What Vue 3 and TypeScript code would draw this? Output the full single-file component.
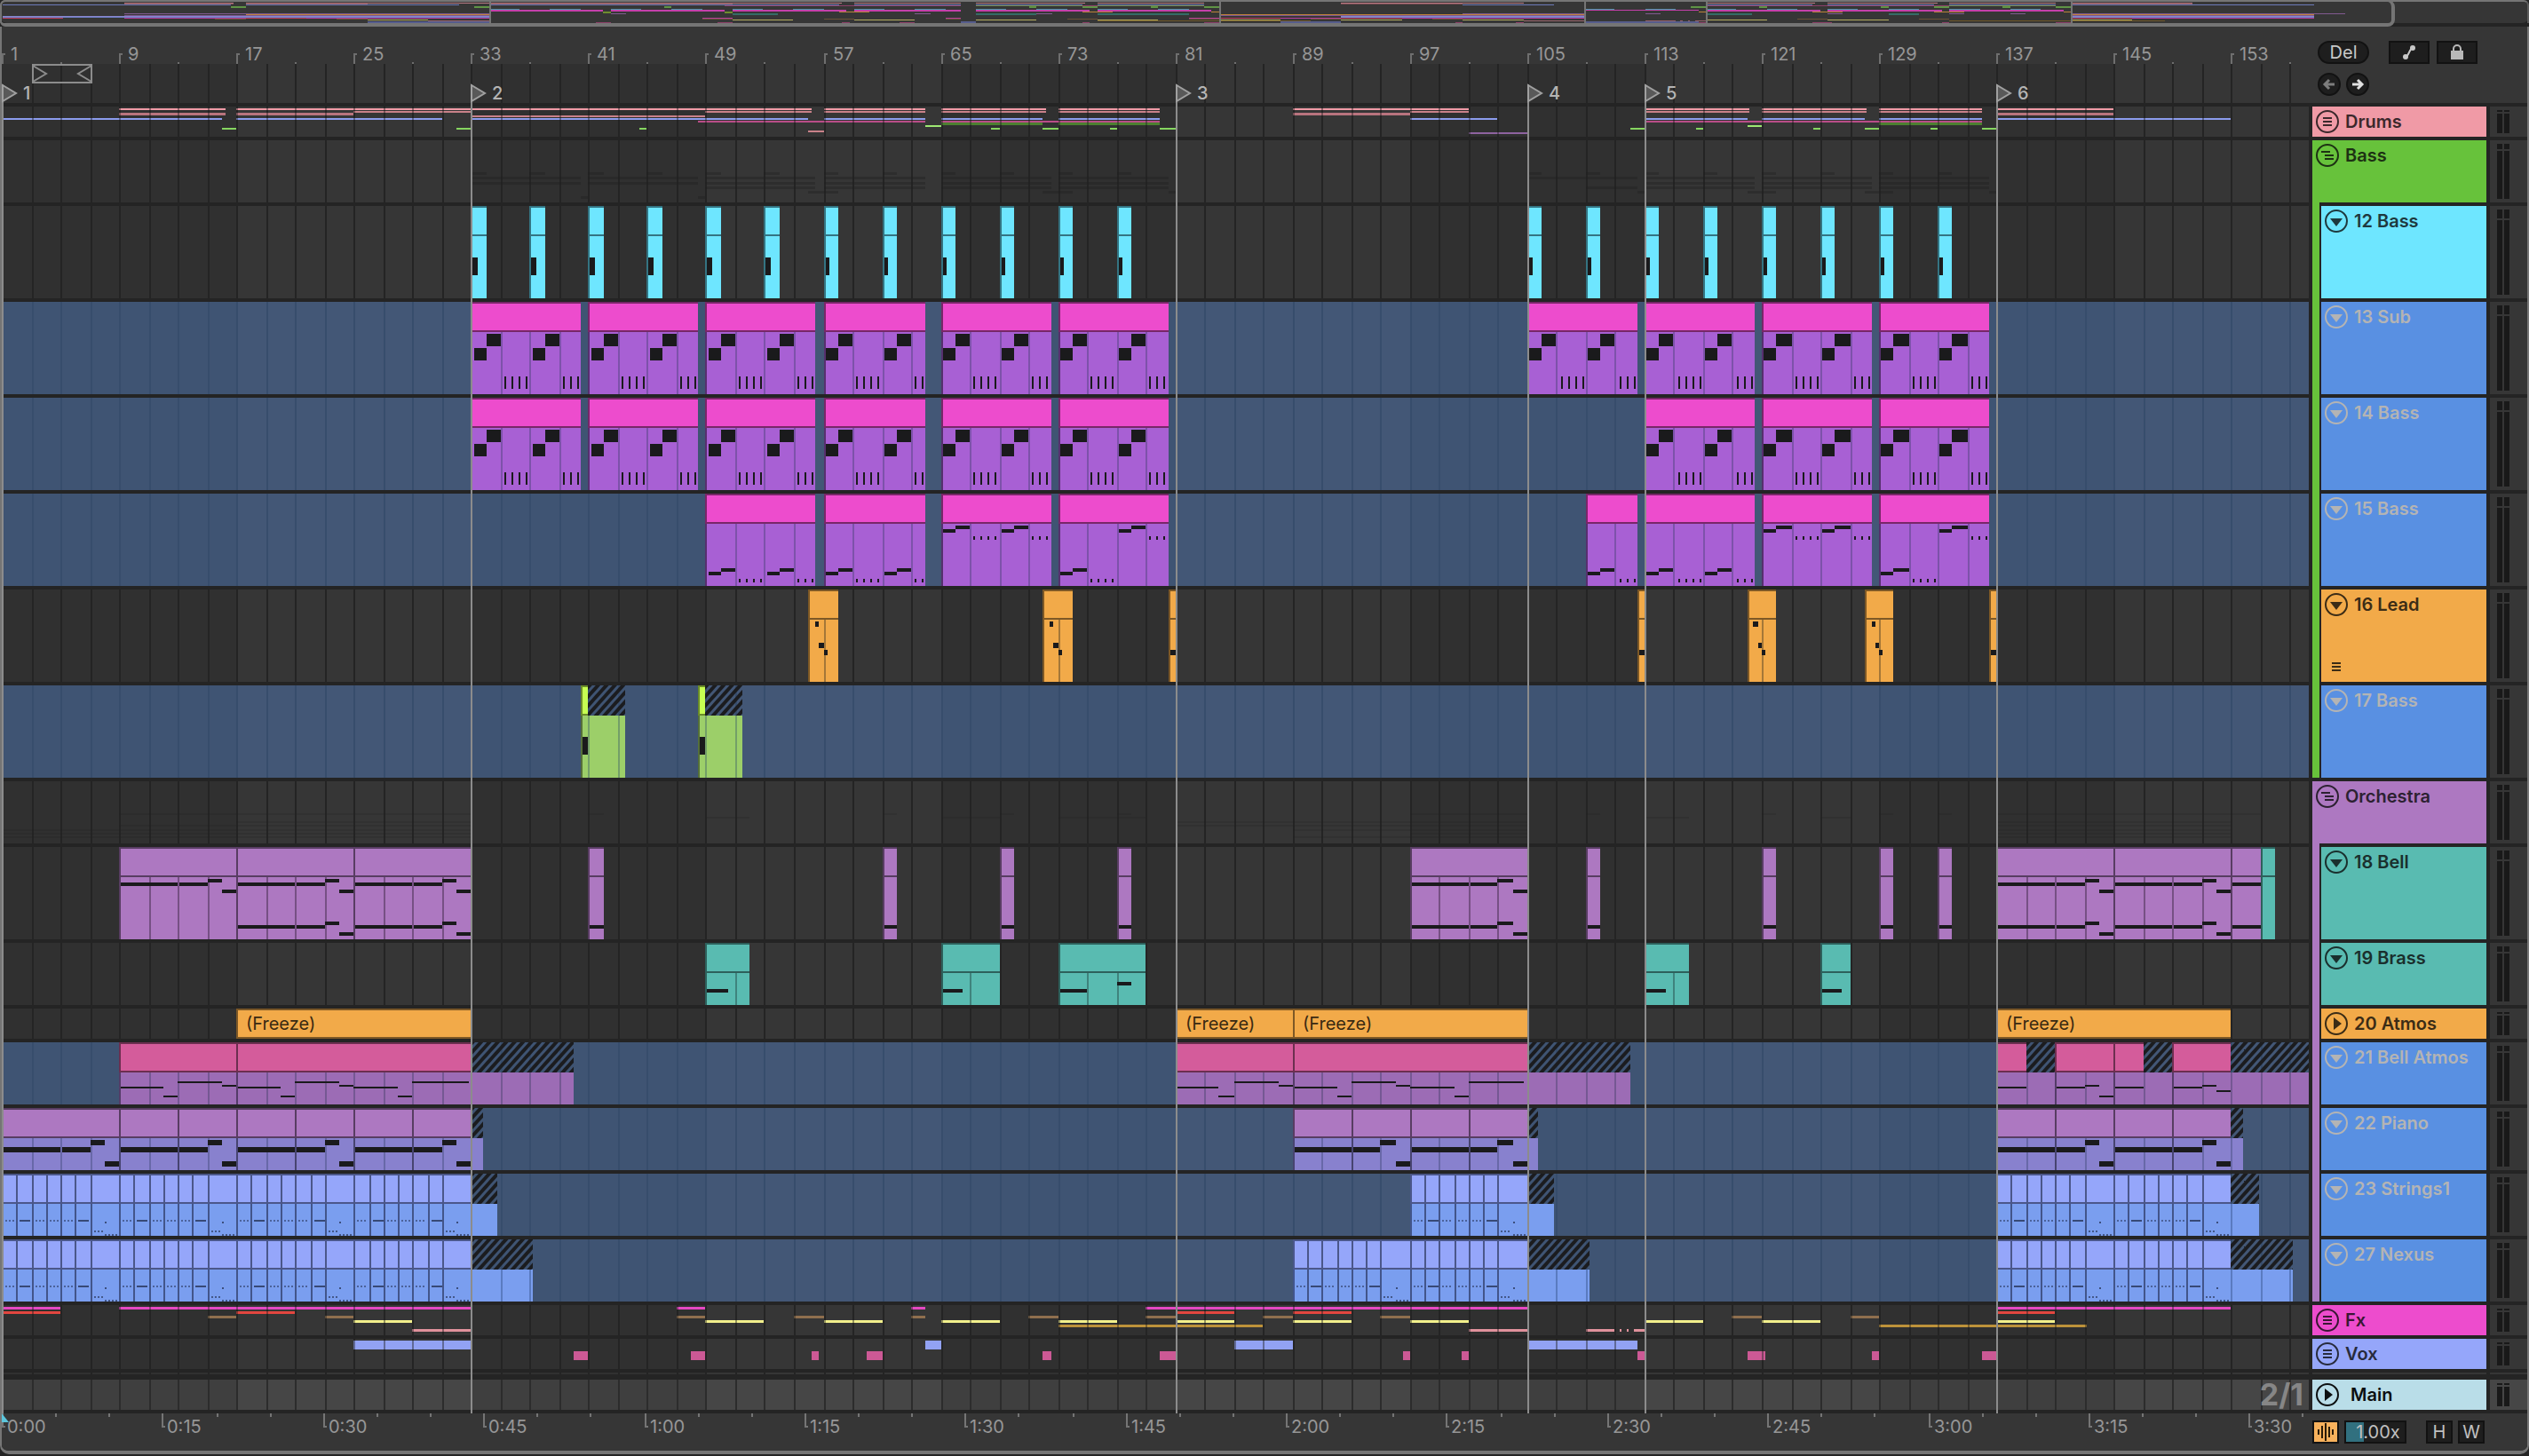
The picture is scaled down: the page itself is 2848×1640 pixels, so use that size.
<script setup lang="ts">
interface Box { x: number; y: number; w: number; h: number; f: string; o?: number }
interface Label { x: number; text: string }
interface Note { at: number; to: number; y: number; h: number; o?: number }
type Span = [number, number]
type Size = 's' | 'm' | 'l'
interface Lane { size: Size; muted: boolean; boxes: Box[]; labels: Label[] }
interface Track { name: string; color: string; size: Size; icon: string; muted?: boolean; extra?: boolean }
interface Group extends Track { kids: Track[] }

const BAR = 16.515
const END = 260
const heights: Record<Size, number> = { s: 34, m: 70, l: 104 }
const INK = '#1a1a1c'

// Bar number to pixels, snapped to the two-pixel raster of the arrangement
const px = (bar: number): number => 2 * Math.floor((1.2 + BAR * (bar - 1)) / 2)
const span = (a: number, b: number, y: number, h: number, f: string, o = 1): Box =>
  ({ x: px(a), y, w: px(b) - px(a), h, f, o })

function gridPath(h: number): string {
  let d = ''
  for (let b = 3; b < END; b += 2) d += `M${px(b)} 0h2v${h}h-2z`
  return d
}
function shadePath(h: number): string {
  let d = ''
  for (let b = 17; b < END; b += 32) d += `M${px(b)} 0h${px(b + 16) - px(b)}v${h}H${px(b)}z`
  return d
}

function body(out: Box[], a: number, b: number, h: number, fill: string, line: string): void {
  out.push(span(a, b, 34, h - 34, fill))
  for (let g = Math.floor(a / 2) * 2 + 1; g < b; g += 2) {
    if (g >= a) out.push({ x: px(g), y: 34, w: 2, h: h - 34, f: line })
  }
}
function clip(out: Box[], a: number, b: number, h: number, c: Palette, notes: Note[] = []): void {
  const x = px(a)
  const w = px(b) - x
  out.push({ x, y: 0, w, h: 34, f: c.edge })
  out.push({ x: x + 2, y: 2, w: w - 2, h: 30, f: c.title })
  body(out, a, b, h, c.body, c.line)
  out.push({ x, y: 34, w: 2, h: h - 34, f: c.side })
  for (const n of notes) {
    if (a + n.at >= b) continue
    const nx = n.at === 0 ? x + 2 : px(a + n.at)
    const end = n.to - n.at < 0.2 ? nx + 2 : px(Math.min(a + n.to, b))
    out.push({ x: nx, y: n.y, w: end - nx, h: n.h, f: INK, o: n.o ?? 1 })
  }
}
function hatch(out: Box[], a: number, b: number, h: number, c: Palette): void {
  out.push(span(a, b, 0, 34, 'url(#hatch)'))
  body(out, a, b, h, c.body, c.line)
}

interface Palette { title: string; body: string; edge: string; side: string; line: string }
const cyan: Palette = { title: '#6ee6ff', body: '#6ee6ff', edge: '#347482', side: '#347482', line: '#4ba0b0' }
const pink: Palette = { title: '#ed4ccd', body: '#a860d4', edge: '#782768', side: '#56306e', line: '#7d52aa' }
const orange: Palette = { title: '#f2aa49', body: '#f2aa49', edge: '#7d5826', side: '#7d5826', line: '#a47738' }
const lime: Palette = { title: '#c6ff52', body: '#9ccf69', edge: '#6b8c2a', side: '#556f3a', line: '#739f68' }
const purple: Palette = { title: '#ad78c1', body: '#ad78c1', edge: '#583d62', side: '#583d62', line: '#765084' }
const teal: Palette = { title: '#59bbb1', body: '#59bbb1', edge: '#2d605b', side: '#2d605b', line: '#3f837d' }
const rose: Palette = { title: '#d45c9b', body: '#9c6cb5', edge: '#6c2f50', side: '#543c68', line: '#755893' }
const piano: Palette = { title: '#ad78c1', body: '#8881ce', edge: '#583d62', side: '#474470', line: '#6868a8' }
const azure: Palette = { title: '#95a6fa', body: '#7a9eef', edge: '#4b578a', side: '#42558a', line: '#5a7bc0' }

const lane = (size: Size, muted = false): Lane => ({ size, muted, boxes: [], labels: [] })

// Collapsed groups: one thin coloured stripe per inner track
type Stripe = { y: number; h: number; f: string; spans: Span[] }
const drumStripes: Stripe[] = [
  { y: 2, h: 2, f: '#f09aa6', spans: [[9, 16.2], [17, 56.2], [57, 64], [65, 72.2], [73, 80], [89, 101], [113, 120.2], [121, 128.2], [129, 136], [137, 145]] },
  { y: 5, h: 2, f: '#c98189', spans: [[25, 33], [49, 56.2], [57, 64], [65, 72.2], [73, 80], [97, 101], [113, 120.2], [121, 128.2], [129, 136]] },
  { y: 7, h: 3, f: '#b9747e', spans: [[9, 16.2], [17, 25], [89, 97], [137, 145]] },
  { y: 10, h: 2, f: '#c98189', spans: [[33, 49]] },
  { y: 13, h: 2, f: '#8c9cee', spans: [[1, 16], [17, 31], [33, 56], [57, 64], [65, 72], [73, 80], [97, 103], [113, 120], [121, 128], [129, 136], [137, 153]] },
  { y: 16, h: 2, f: '#b94d88', spans: [[48.5, 64], [65, 80], [113, 136]] },
  { y: 18, h: 3, f: '#4c8030', spans: [[65, 72], [73, 80], [129, 136]] },
  { y: 21, h: 2, f: '#9ee873', spans: [[64, 65], [120, 121]] },
  { y: 24, h: 2, f: '#86d660', spans: [[16, 17], [32, 33], [44.5, 45], [68.5, 69], [72, 73], [76.5, 77], [80, 81], [112, 113], [116.5, 117], [124.5, 125], [128, 129], [132.5, 133], [136, 137]] },
  { y: 27, h: 2, f: '#c98189', spans: [[56, 57]] },
  { y: 29, h: 2, f: '#8e63a0', spans: [[101, 105]] },
]
const fxStripes: Stripe[] = [
  { y: 2, h: 3, f: '#e548c2', spans: [[1, 5], [9, 33], [47, 49], [63, 64], [79, 105], [137, 153]] },
  { y: 7, h: 3, f: '#e2463f', spans: [[1, 5], [17, 21], [81, 85], [89, 93], [137, 141]] },
  { y: 12, h: 3, f: '#8f6f4e', spans: [[15, 17], [23, 25], [47, 49], [55, 57], [63, 64], [71, 73], [79, 81], [87, 89], [95, 97], [119, 121], [127, 129]] },
  { y: 17, h: 3, f: '#f2f08c', spans: [[25, 29], [49, 53], [57, 61], [65, 69], [73, 77], [81, 85], [89, 93], [97, 101], [113, 117], [121, 125], [137, 141]] },
  { y: 22, h: 3, f: '#bd923a', spans: [[73, 87], [129, 143.2]] },
  { y: 27, h: 3, f: '#e0919c', spans: [[29, 33], [101, 105], [109, 111], [111.3, 111.45], [111.8, 111.95], [112.3, 113]] },
]
const voxStripes: Stripe[] = [
  { y: 2, h: 10, f: '#92a2f4', spans: [[25, 33], [64, 65], [85, 89], [105, 112.5]] },
  { y: 14, h: 10, f: '#cc5995', spans: [[40, 41], [48, 49], [56.2, 56.7], [60, 61], [72, 72.5], [80, 81], [96.5, 97], [100.5, 101], [112.5, 113], [120, 121.3], [128.5, 129], [136, 137]] },
]
function stripes(list: Stripe[]): Lane {
  const l = lane('s')
  for (const s of list) {
    for (const [a, b] of s.spans) {
      l.boxes.push(span(a, b, s.y, s.h, s.f))
      for (let g = Math.ceil(a / 2) * 2 - 1; g < b; g += 2) {
        if (g >= a) l.boxes.push({ x: px(g), y: s.y, w: 2, h: s.h, f: '#242424', o: 0.45 })
      }
    }
  }
  return l
}

const every = (a: number, b: number, step: number): Span[] => {
  const r: Span[] = []
  for (let k = a; k <= b; k += step) r.push([k, k + 1])
  return r
}
const bassClips: Span[] = [...every(33, 77, 4), ...every(105, 133, 4)]
const subClips: Span[] = [[33, 40.5], [41, 48.5], [49, 56.5], [57, 64], [65, 72.5], [73, 80.5], [105, 112.5], [113, 120.5], [121, 128.5], [129, 136.5]]
const bass14: Span[] = subClips.filter(([a]) => a !== 105)
const bass15: Span[] = [[49, 56.5], [57, 64], [65, 72.5], [73, 80.5], [109, 112.5], [113, 120.5], [121, 128.5], [129, 136.5]]
const leadClips: Span[] = [[56, 58], [72, 74], [80.5, 81], [112.5, 113], [120, 122], [128, 130], [136.5, 137]]
const bellLong: Span[] = [[9, 17], [17, 25], [25, 33], [97, 105], [137, 145], [145, 153], [153, 155]]
const bellShort: Span[] = [[41, 42], [61, 62], [69, 70], [77, 78], [109, 110], [121, 122], [129, 130], [133, 134]]
const brassClips: Span[] = [[49, 52], [65, 69], [73, 79], [113, 116], [125, 127]]
const freezeClips: Span[] = [[17, 33], [81, 89], [89, 105], [137, 153]]

function riff(lo: number, hi: number, dot: number, h: number, dotH: number, start: number): Note[] {
  const r: Note[] = [
    { at: start + 0.15, to: start + 1, y: lo, h },
    { at: start + 1, to: start + 2, y: hi, h },
  ]
  for (let k = 0; k < 4; k++) r.push({ at: start + 2.27 + k * 0.485, to: start + 2.3 + k * 0.485, y: dot, h: dotH })
  return r
}

const bassLane = lane('l')
for (const [a, b] of bassClips) clip(bassLane.boxes, a, b, 104, cyan, [{ at: 0, to: 0.4, y: 58, h: 20 }])
const subLane = (spans: Span[]): Lane => {
  const l = lane('l', true)
  for (const [a, b] of spans) clip(l.boxes, a, b, 104, pink, [...riff(52, 36, 84, 14, 14, 0), ...riff(52, 36, 84, 14, 14, 4)])
  return l
}
const lane15 = lane('l', true)
for (const [a, b] of bass15) {
  const low = (s: number): Note[] => riff(88, 84, 96, 4, 4, s)
  const high = (s: number): Note[] => riff(40, 36, 48, 4, 4, s)
  const allHigh = a === 65 || a === 121
  clip(lane15.boxes, a, b, 104, pink, [...(allHigh ? high(0) : low(0)), ...(allHigh || a === 73 || a === 129 ? high(4) : low(4))])
}
const leadLane = lane('l')
for (const [a, b] of leadClips) {
  clip(leadLane.boxes, a, b, 104, orange, b - a < 1
    ? [{ at: 0, to: 1, y: 68, h: 6 }]
    : [{ at: 0.45, to: 0.7, y: 36, h: 6 }, { at: 0.7, to: 1, y: 60, h: 6 }, { at: 1, to: 1.25, y: 68, h: 6 }])
}
const lane17 = lane('l', true)
for (const a of [40.5, 48.5]) {
  clip(lane17.boxes, a, a + 0.5, 104, lime, [{ at: 0, to: 1, y: 58, h: 20 }])
  hatch(lane17.boxes, a + 0.5, a + 2.95, 104, lime)
}

const bellRun = (y: number): Note[] => [
  { at: 0, to: 4, y: y + 4, h: 4 }, { at: 4.1, to: 6, y: y + 4, h: 4 }, { at: 6, to: 7, y, h: 4 }, { at: 7, to: 8, y: y + 12, h: 4 },
]
const bellLane = lane('l')
for (const [a, b] of bellLong) clip(bellLane.boxes, a, b, 104, purple, a === 9 ? bellRun(36) : [...bellRun(36), ...bellRun(84)])
for (const [a, b] of bellShort) clip(bellLane.boxes, a, b, 104, purple, [{ at: 0, to: 1, y: 88, h: 4 }])
clip(bellLane.boxes, 155, 156, 104, teal)

const brassLane = lane('m')
for (const [a, b] of brassClips) {
  clip(brassLane.boxes, a, b, 70, teal, a === 73
    ? [{ at: 0, to: 2, y: 52, h: 4 }, { at: 4, to: 5, y: 44, h: 4 }]
    : [{ at: 0, to: 1.5, y: 52, h: 4 }])
}
const atmosLane = lane('s')
for (const [a, b] of freezeClips) {
  const x = px(a)
  const w = px(b) - x
  atmosLane.boxes.push({ x, y: 0, w, h: 34, f: orange.edge }, { x: x + 2, y: 2, w: w - 2, h: 30, f: orange.title })
  atmosLane.labels.push({ x: x + 11, text: '(Freeze)' })
}

const bellAtmos = lane('m', true)
const phrase = (s: number, last = false): Note[] => [
  { at: s, to: s + 3, y: 50, h: 2 }, { at: s + 3, to: s + 4, y: 60, h: 2 }, { at: s + 4, to: s + (last ? 7.8 : 7), y: 44, h: 2 },
  ...(last ? [] : [{ at: s + 7, to: s + 8, y: 48, h: 2 }]),
]
for (const a of [9, 81]) {
  clip(bellAtmos.boxes, a, a + 8, 70, rose, phrase(0))
  clip(bellAtmos.boxes, a + 8, a + 24, 70, rose, [...phrase(0), ...phrase(8, true)])
  hatch(bellAtmos.boxes, a + 24, a + 31, 70, rose)
}
const two: Note = { at: 0, to: 2, y: 50, h: 2 }
clip(bellAtmos.boxes, 137, 139, 70, rose, [two])
hatch(bellAtmos.boxes, 139, 141, 70, rose)
clip(bellAtmos.boxes, 141, 145, 70, rose, [two, { at: 2, to: 3, y: 48, h: 2 }, { at: 3, to: 4, y: 60, h: 2 }])
clip(bellAtmos.boxes, 145, 147, 70, rose, [two])
hatch(bellAtmos.boxes, 147, 149, 70, rose)
clip(bellAtmos.boxes, 149, 153, 70, rose, [two, { at: 2, to: 3, y: 48, h: 2 }, { at: 3, to: 4, y: 54, h: 2 }])
hatch(bellAtmos.boxes, 153, 161, 70, rose)

const pianoLane = lane('m', true)
const first: Note = { at: 0, to: 4, y: 44, h: 6 }
const second: Note[] = [{ at: 0, to: 2, y: 44, h: 6 }, { at: 2, to: 3, y: 36, h: 6 }, { at: 3, to: 4, y: 60, h: 6 }]
clip(pianoLane.boxes, 1, 9, 70, piano, [first, { at: 4.1, to: 6, y: 44, h: 6 }, { at: 6, to: 7, y: 36, h: 6 }, { at: 7, to: 8, y: 60, h: 6 }])
for (const a of [9, 17, 25, 89, 97, 137, 145]) {
  clip(pianoLane.boxes, a, a + 4, 70, piano, [first])
  clip(pianoLane.boxes, a + 4, a + 8, 70, piano, second)
}
for (const a of [33, 105, 153]) hatch(pianoLane.boxes, a, a + 0.8, 70, piano)

function chops(starts: number[], tails: Span[]): Lane {
  const l = lane('m', true)
  for (const s of starts) {
    for (let k = 0; k < 7; k++) {
      const a = s + k
      clip(l.boxes, a, k === 6 ? a + 2 : a + 1, 70, azure)
      const dense = k === 1 || k === 5
      if (k < 6) {
        for (let d = 0; d < 3; d++) l.boxes.push({ x: px(a) + 4 + d * 4, y: 52, w: dense ? 4 : 2, h: 2, f: '#2c3a60', o: dense ? 0.85 : 0.6 })
      } else {
        for (let d = 0; d < 3; d++) l.boxes.push({ x: px(a) + 4 + d * 4, y: 64, w: 2, h: 2, f: '#2c3a60', o: 0.7 })
        for (let d = 0; d < 4; d++) l.boxes.push({ x: px(a + 1) + d * 4, y: 68, w: 2, h: 2, f: '#2c3a60', o: 0.7 })
        l.boxes.push({ x: px(a + 1), y: 54, w: 2, h: 2, f: '#2c3a60', o: 0.8 })
      }
    }
  }
  for (const [a, b] of tails) hatch(l.boxes, a, b, 70, azure)
  return l
}
const stringsLane = chops([1, 9, 17, 25, 97, 137, 145], [[33, 34.8], [105, 106.85], [153, 154.9]])
const nexusLane = chops([1, 9, 17, 25, 89, 97, 137, 145], [[33, 37.2], [105, 109.2], [153, 157.2]])

// Unfolded groups show a faint shadow of the clips they hold
const shadow = (list: Span[][], top: number, pitch: number, h: number): Lane => {
  const l = lane('m')
  list.forEach((spans, i) => {
    for (const [a, b] of spans) l.boxes.push(span(a, b, Math.round(top + i * pitch), h, '#202020', 0.4))
  })
  return l
}
const bassGroup = shadow([bassClips, subClips, bass14, bass15, leadClips, [[40.5, 41], [48.5, 49]]], 36, 5.3, 3)
const orchGroup = shadow([[...bellLong, ...bellShort], brassClips, freezeClips, [[9, 33], [81, 105], [137, 153]], [[1, 33], [89, 105], [137, 153]], [[1, 33], [97, 105], [137, 153]], [[1, 33], [89, 105], [137, 153]]], 36, 4.4, 2)
for (const b of orchGroup.boxes) b.o = 0.22

const lanes: Lane[] = [
  stripes(drumStripes), bassGroup, bassLane, subLane(subClips), subLane(bass14), lane15, leadLane, lane17,
  orchGroup, bellLane, brassLane, atmosLane, bellAtmos, pianoLane, stringsLane, nexusLane,
  stripes(fxStripes), stripes(voxStripes),
]

const blue = '#5990e2'
const groups: Group[] = [
  { name: 'Drums', color: '#f09aa6', size: 's', icon: 'lines', kids: [] },
  { name: 'Bass', color: '#67c23b', size: 'm', icon: 'tree', kids: [
    { name: '12 Bass', color: '#6ee6ff', size: 'l', icon: 'down' },
    { name: '13 Sub', color: blue, size: 'l', icon: 'down', muted: true },
    { name: '14 Bass', color: blue, size: 'l', icon: 'down', muted: true },
    { name: '15 Bass', color: blue, size: 'l', icon: 'down', muted: true },
    { name: '16 Lead', color: '#f2aa49', size: 'l', icon: 'down', extra: true },
    { name: '17 Bass', color: blue, size: 'l', icon: 'down', muted: true },
  ] },
  { name: 'Orchestra', color: '#ad78c1', size: 'm', icon: 'tree', kids: [
    { name: '18 Bell', color: '#59bbb1', size: 'l', icon: 'down' },
    { name: '19 Brass', color: '#59bbb1', size: 'm', icon: 'down' },
    { name: '20 Atmos', color: '#f2aa49', size: 's', icon: 'right' },
    { name: '21 Bell Atmos', color: blue, size: 'm', icon: 'down', muted: true },
    { name: '22 Piano', color: blue, size: 'm', icon: 'down', muted: true },
    { name: '23 Strings1', color: blue, size: 'm', icon: 'down', muted: true },
    { name: '27 Nexus', color: blue, size: 'm', icon: 'down', muted: true },
  ] },
  { name: 'Fx', color: '#ed4ccd', size: 's', icon: 'lines', kids: [] },
  { name: 'Vox', color: '#95a6fa', size: 's', icon: 'lines', kids: [] },
]
const glyph: Record<string, string> = {
  lines: 'M8 8h10v2H8zM8 12h10v2H8zM8 16h10v2H8z',
  tree: 'M6 8h10v2H6zM10 12h10v2H10zM10 16h10v2H10z',
  down: 'M6 10h14l-7 9z',
  right: 'M10 6v14l9-7z',
}
const inkOf = (t: Track): string => (t.muted ? '#b4b4b4' : `color-mix(in srgb, ${t.color} 22%, #080808)`)

const locators = [1, 33, 81, 105, 113, 137].map((bar, i) => ({ bar, n: i + 1 }))
const barMarks = Array.from({ length: 20 }, (_, i) => 1 + i * 8)
const halfMarks = barMarks.map((b) => b + 4)
const sec = (s: number): number => 2 * Math.floor((1.2 + s * 12.05) / 2)
const timeMarks = Array.from({ length: 15 }, (_, i) => i * 15)
const shortMarks = timeMarks.flatMap((t) => [t + 5, t + 10])
const clock = (s: number): string => `${Math.floor(s / 60)}:${String(s % 60).padStart(2, '0')}`

// Song overview
const mini: Box[] = []
const ox = (bar: number): number => Math.round(2.6 + 17.13 * (bar - 1))
const ov = (spans: Span[], y: number, h: number, f: string): void => {
  for (const [a, b] of spans) mini.push({ x: ox(a), y, w: ox(b) - ox(a), h, f })
}
ov(drumStripes[0].spans, 3, 1, '#b97b84')
ov(drumStripes[2].spans, 4, 1, '#7e5056')
ov([[33, 49]], 4, 1, '#7e5056')
ov(drumStripes[4].spans, 5, 1, '#6c7ab8')
ov(drumStripes[5].spans, 6, 1, '#8d4069')
ov(drumStripes[6].spans, 6, 1, '#6c8040')
ov(drumStripes[8].spans, 7, 2, '#5f9446')
ov(bassClips.map(([a]) => [a, a + 2] as Span), 10, 1, '#4a9aa8')
ov(subClips, 11, 1, '#c440aa')
ov(bass14, 12, 1, '#c440aa')
ov(leadClips, 13, 1, '#b98439')
ov([[40.5, 41], [48.5, 49]], 13, 2, '#6f8c2e')
ov(bellShort, 15, 1, '#815a90')
ov(bellLong, 15, 1, '#815a90')
ov(brassClips, 15, 2, '#346c66')
ov(freezeClips, 16, 1, '#c08238')
ov([[9, 33], [81, 105], [137, 153]], 17, 1, '#7d5590')
ov([[1, 33], [89, 105], [137, 153]], 18, 1, '#8a86cc')
ov([[1, 33], [89, 105], [137, 153]], 19, 1, '#6a7fc2')
ov(fxStripes[0].spans, 20, 1, '#b83c9c')
ov(fxStripes[1].spans, 20, 1, '#c03f5c')
ov(fxStripes[2].spans, 21, 1, '#6c5439')
ov(fxStripes[3].spans, 22, 1, '#b5ae60')
ov(fxStripes[4].spans, 23, 1, '#6f5728')
ov(fxStripes[5].spans, 23, 1, '#96626a')
ov(voxStripes[0].spans, 24, 2, '#565d8c')
ov(voxStripes[1].spans, 25, 1, '#8d4069')
for (const b of [33, 81, 105, 113, 137]) mini.push({ x: ox(b), y: 2, w: 2, h: 24, f: '#757575' })
</script>

<template>
  <main class="window">
    <svg class="defs" aria-hidden="true">
      <defs>
        <pattern id="hatch" width="7" height="7" patternUnits="userSpaceOnUse" patternTransform="rotate(42)">
          <rect width="4" height="7" fill="#1b1c1f" />
        </pattern>
      </defs>
    </svg>

    <section class="overview" aria-label="Song overview">
      <svg class="overview-map" viewBox="0 0 2848 26" preserveAspectRatio="none">
        <rect v-for="(b, i) in mini" :key="i" :x="b.x" :y="b.y" :width="b.w" :height="b.h" :fill="b.f" />
      </svg>
      <div class="overview-view"></div>
    </section>

    <div class="frame">
      <header class="top">
        <svg class="ruler">
          <rect y="42" width="100%" height="44" fill="#303030" />
          <g transform="translate(0 42)">
            <path :d="shadePath(44)" fill="#363636" />
            <path :d="gridPath(44)" fill="#242424" />
          </g>
          <g v-for="b in barMarks" :key="b">
            <path :d="`M${px(b)} 30h4v2h-2v10h-2z`" fill="#6e6e6e" />
            <text class="num" :x="px(b) + 10" y="38">{{ b }}</text>
          </g>
          <rect v-for="b in halfMarks" :key="b" :x="px(b)" y="40" width="2" height="2" fill="#6e6e6e" />
          <path d="M35 43h66v20h-66zM35 44l15 9-15 9M101 44l-15 9 15 9" fill="none" stroke="#8c8c8c" stroke-width="2" />
          <g v-for="l in locators" :key="l.n">
            <path :d="`M${px(l.bar) + 1} 65v21`" stroke="#8c8c8c" stroke-width="2" />
            <path :d="`M${px(l.bar) + 1} 66l15 9-15 9z`" fill="#595959" stroke="#a0a0a0" stroke-width="2" />
            <text class="num loc" :x="px(l.bar) + 24" y="82">{{ l.n }}</text>
          </g>
        </svg>
        <div class="tools">
          <div class="tool-row">
            <button class="pill">Del</button>
            <button class="square first" aria-label="Automation mode">
              <svg width="26" height="22" viewBox="0 0 26 22"><path d="M9 16C13 15 13 7 17 6" fill="none" stroke="#c8c8c8" stroke-width="2" /><circle cx="9" cy="16" r="3" fill="#c8c8c8" /><circle cx="17" cy="6" r="3" fill="#c8c8c8" /></svg>
            </button>
            <button class="square" aria-label="Lock envelopes">
              <svg width="26" height="22" viewBox="0 0 26 22"><rect x="6" y="9" width="14" height="10" fill="#b8b8b8" /><path d="M9 9V7a4 4 0 0 1 8 0v2" fill="none" stroke="#b8b8b8" stroke-width="2" /></svg>
            </button>
          </div>
          <div class="tool-row">
            <button class="round" aria-label="Previous locator">
              <svg width="22" height="22" viewBox="0 0 22 22"><path d="M17 11H6M11 6l-5 5 5 5" fill="none" stroke="#7d7d7d" stroke-width="3" /></svg>
            </button>
            <button class="round" aria-label="Next locator">
              <svg width="22" height="22" viewBox="0 0 22 22"><path d="M5 11h11M11 6l5 5-5 5" fill="none" stroke="#e0e0e0" stroke-width="3" /></svg>
            </button>
          </div>
        </div>
      </header>

      <div class="tracks">
        <div class="lanes">
          <svg v-for="(l, i) in lanes" :key="i" :class="['lane', l.size, { muted: l.muted }]">
            <path class="shade" :d="shadePath(heights[l.size])" />
            <path class="grid" :d="gridPath(heights[l.size])" />
            <rect v-for="(b, k) in l.boxes" :key="k" :x="b.x" :y="b.y" :width="b.w" :height="b.h" :fill="b.f" :opacity="b.o" />
            <text v-for="(t, k) in l.labels" :key="'t' + k" class="clip-name" :x="t.x" y="24">{{ t.text }}</text>
          </svg>
          <svg class="lane sliver"><path class="shade" :d="shadePath(2)" /><path class="grid" :d="gridPath(2)" /></svg>
          <div class="main-lane">
            <svg class="lane s main-grid"><path class="shade" :d="shadePath(34)" /><path class="grid" :d="gridPath(34)" /></svg>
            <span class="signature">2/1</span>
          </div>
          <svg class="locator-lines" aria-hidden="true">
            <rect v-for="l in locators" :key="l.n" :x="px(l.bar)" y="0" width="2" height="100%" fill="#8c8c8c" />
          </svg>
        </div>

        <div class="heads">
          <div v-for="g in groups" :key="g.name" class="group" :style="{ background: g.color }">
            <div :class="['head', g.size]" :style="{ color: inkOf(g) }">
              <button class="fold" :aria-label="'Unfold ' + g.name">
                <svg width="26" height="26" viewBox="0 0 26 26"><circle cx="13" cy="13" r="12" fill="none" stroke="currentColor" stroke-width="2" /><path :d="glyph[g.icon]" fill="currentColor" /></svg>
              </button>
              <span>{{ g.name }}</span>
            </div>
            <div v-if="g.kids.length" class="kids">
              <div v-for="t in g.kids" :key="t.name" :class="['head', t.size]" :style="{ background: t.color, color: inkOf(t) }">
                <button class="fold" :aria-label="'Unfold ' + t.name">
                  <svg width="26" height="26" viewBox="0 0 26 26"><circle cx="13" cy="13" r="12" fill="none" stroke="currentColor" stroke-width="2" /><path :d="glyph[t.icon]" fill="currentColor" /></svg>
                </button>
                <span>{{ t.name }}</span>
                <svg v-if="t.extra" class="extra" width="10" height="10" viewBox="0 0 10 10"><path d="M0 0h10v2H0zM0 4h10v2H0zM0 8h10v2H0z" fill="currentColor" /></svg>
              </div>
            </div>
          </div>
          <div class="sliver"></div>
          <div class="head s main-head">
            <button class="fold" aria-label="Unfold Main">
              <svg width="26" height="26" viewBox="0 0 26 26"><circle cx="13" cy="13" r="12" fill="none" stroke="currentColor" stroke-width="2" /><path :d="glyph.right" fill="currentColor" /></svg>
            </button>
            <span>Main</span>
          </div>
        </div>

        <div class="meters">
          <div v-for="(l, i) in lanes" :key="i" :class="['meter', l.size]"><i></i><i></i><b></b><b></b></div>
          <div class="sliver"></div>
          <div class="meter s main-meter"><i></i><i></i><b></b><b></b></div>
        </div>
      </div>

      <footer class="bottom">
        <svg class="clock">
          <g v-for="t in timeMarks" :key="t">
            <path :d="`M${sec(t)} 0h2v14h2v2h-4z`" fill="#757575" />
            <text class="num" :x="sec(t) + 6" y="22">{{ clock(t) }}</text>
          </g>
          <rect v-for="t in shortMarks" :key="t" :x="sec(t)" y="0" width="2" height="4" fill="#757575" />
          <path d="M0 0l8 10H0z" fill="#5cc6dc" />
        </svg>
        <div class="controls">
          <button class="wave" aria-label="Optimize height">
            <svg width="26" height="22" viewBox="0 0 26 22"><path d="M5 8v6M9 4v14M13 1v20M17 5v12M21 8v6" stroke="#2a1c08" stroke-width="2" /></svg>
          </button>
          <input class="speed" value="1.00x" aria-label="Waveform zoom" />
          <button class="key h">H</button>
          <button class="key">W</button>
        </div>
      </footer>
    </div>
  </main>
</template>

<style>
body { margin: 0; background: #2a2a2a; }
</style>

<style scoped>
.window { font-family: Inter, "Liberation Sans", sans-serif; font-size: 20px; background: #242424; color: #b4b4b4; padding-bottom: 2px; }
.defs { position: absolute; width: 0; height: 0; }
svg { display: block; }
button, input { font: inherit; padding: 0; margin: 0; box-sizing: border-box; }

.overview { position: relative; height: 30px; background: #242424; }
.overview-map { box-sizing: border-box; width: 100%; height: 26px; background: #363636; border-radius: 8px; }
.overview::before { content: ""; position: absolute; inset: 0 0 4px 0; border: 2px solid #5c5c5c; border-top-color: #757575; border-bottom: 0; border-radius: 6px 6px 0 0; }
.overview-view { position: absolute; top: 0; left: 0; bottom: 0; width: 94.7%; box-sizing: border-box; border: 2px solid #757575; border-bottom-width: 4px; border-right-width: 4px; border-radius: 6px 8px 8px 6px; }

.frame { border: solid #757575; border-width: 0 2px 4px 2px; border-radius: 0 0 10px 10px; overflow: hidden; background: #242424; }
.top { display: flex; gap: 4px; height: 86px; background: #363636; }
.ruler { flex: 1; min-width: 0; height: 86px; overflow: hidden; }
.num { fill: #969696; font-size: 20px; }
.loc { fill: #b4b4b4; font-weight: 500; }
.tools { width: 242px; display: flex; flex-direction: column; gap: 10px; padding: 16px 0 0 6px; box-sizing: border-box; }
.tool-row { display: flex; gap: 6px; }
.pill, .round, .square { height: 26px; background: #1e1e1e; border: 2px solid #121212; color: #c8c8c8; display: grid; place-items: center; line-height: 22px; }
.pill { width: 58px; border-radius: 13px; font-size: 20px; }
.round { width: 26px; border-radius: 13px; }
.square { width: 46px; }
.square + .square { margin-left: 2px; }
.square.first { margin-left: 16px; }

.tracks { display: flex; gap: 4px; padding-top: 4px; }
.lanes, .heads, .meters { display: flex; flex-direction: column; gap: 4px; }
.lanes { position: relative; flex: 1; min-width: 0; padding-bottom: 4px; }
.lane { width: 100%; background: #303030; overflow: hidden; shape-rendering: crispEdges; }
.lane .shade { fill: #363636; }
.lane .grid { fill: #242424; }
.lane.muted { background: #3f5473; }
.lane.muted .shade { fill: #435776; }
.lane.muted .grid { fill: #374d6c; }
.lane.main-grid { background: #3f3f3f; }
.main-grid .shade { fill: #464646; }
.main-grid .grid { fill: #2c2c2c; }
.s { height: 34px; }
.m { height: 70px; }
.l { height: 104px; }
.sliver { height: 2px; margin-bottom: 2px; background: #303030; }
.clip-name { fill: #3a2a12; font-size: 20px; }
.main-lane { position: relative; }
.signature { position: absolute; right: 6px; top: 0; font-size: 34px; line-height: 34px; font-weight: 700; color: #868686; }
.locator-lines { position: absolute; left: 0; top: -4px; width: 100%; height: calc(100% + 4px); }

.heads { width: 196px; }
.kids { margin-left: 8px; padding: 4px 0 0 2px; background: #242424; display: flex; flex-direction: column; gap: 4px; }
.head { position: relative; display: flex; align-items: flex-start; gap: 7px; padding: 4px; box-sizing: border-box; font-weight: 600; line-height: 26px; white-space: nowrap; }
.fold { width: 26px; height: 26px; border: 0; background: none; color: inherit; }
.extra { position: absolute; left: 12px; bottom: 12px; }
.main-head { background: #b9dde8; color: #0c0f10; gap: 13px; }

.meters { width: 42px; }
.meters .sliver, .heads .sliver { background: #363636; }
.meter { background: #363636; display: grid; box-sizing: border-box; padding: 4px 8px; grid-template-columns: 6px 6px; gap: 2px; }
.meter.s { grid-template-rows: 2px 1fr; }
.meter.m { grid-template-rows: 6px 1fr; }
.meter.l { grid-template-rows: 10px 1fr; }
.meter i, .meter b { background: #191919; }
.main-meter { background: #464646; }

.bottom { display: flex; gap: 4px; height: 42px; background: #363636; }
.clock { flex: 1; min-width: 0; height: 42px; overflow: hidden; }
.controls { width: 242px; display: flex; align-items: flex-start; gap: 6px; padding-top: 8px; box-sizing: border-box; }
.wave, .key, .speed { height: 26px; border: 2px solid #121212; display: grid; place-items: center; line-height: 22px; }
.wave { width: 30px; background: #f7b15c; }
.speed { width: 70px; padding-left: 6px; color: #c0c0c0; font-size: 20px; background: linear-gradient(90deg, #31707f 20px, #1e1e1e 20px); border-radius: 0; }
.key { width: 30px; background: #1e1e1e; color: #c0c0c0; font-size: 20px; }
.key.h { margin-left: 16px; }
</style>
